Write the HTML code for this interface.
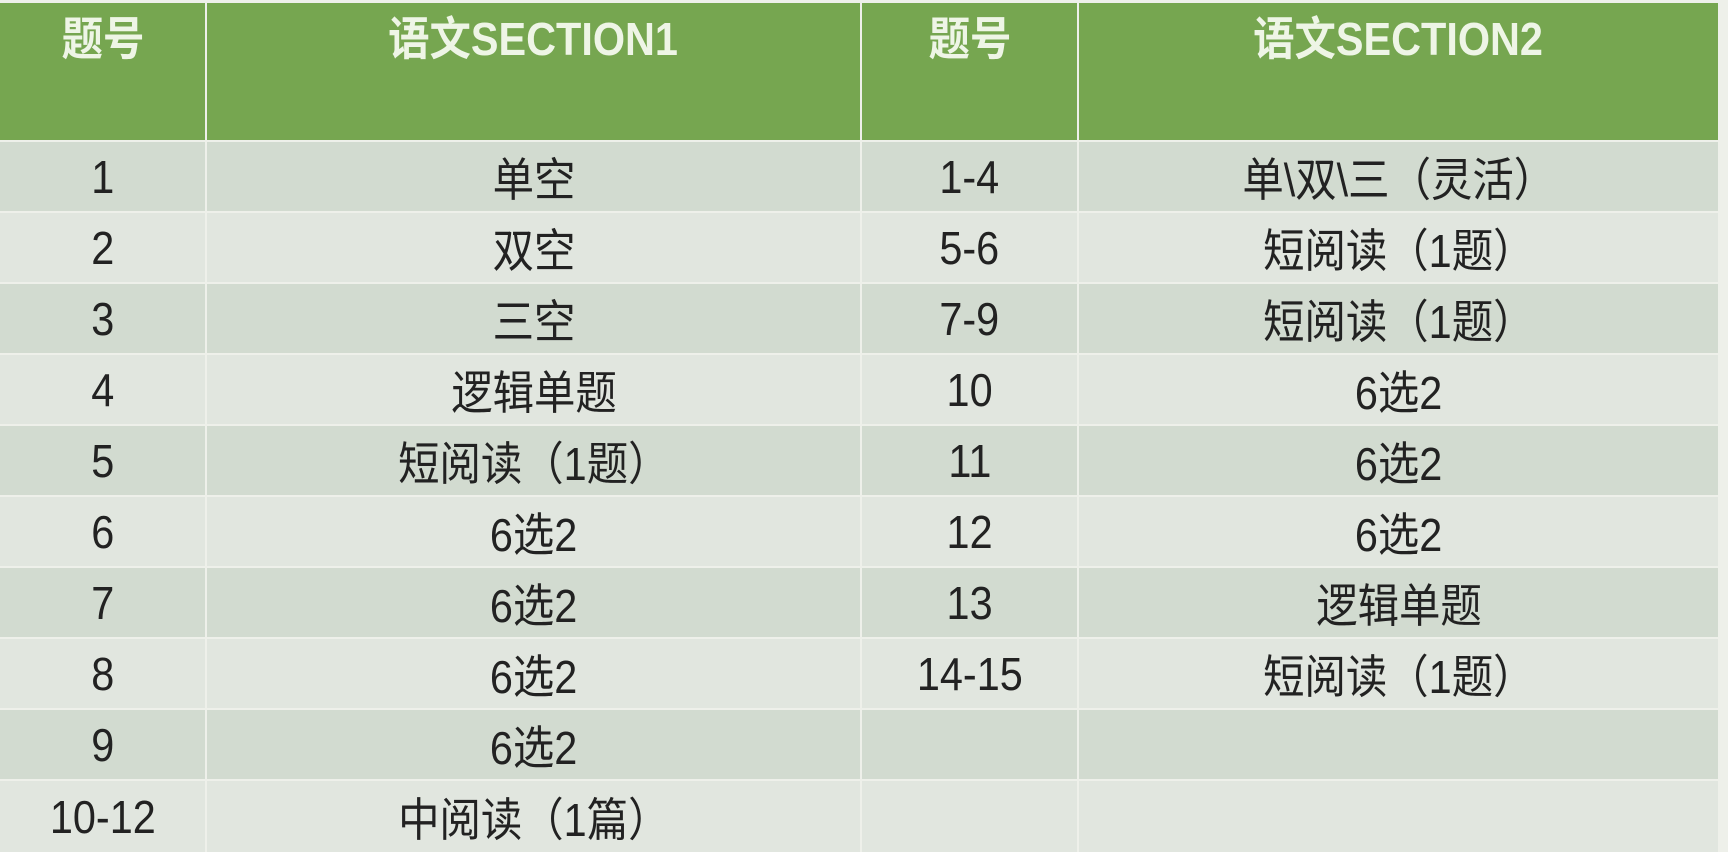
<!DOCTYPE html>
<html><head><meta charset="utf-8"><style>
html,body{margin:0;padding:0;background:#eef0ea;width:1728px;height:852px;overflow:hidden;position:relative}
.r{position:absolute;left:0;width:1728px;height:69px}
.c{position:absolute;top:0;height:100%;display:flex;align-items:center;justify-content:center;font-family:"Liberation Sans","Noto Sans CJK SC",sans-serif;font-size:46px;color:#222;box-sizing:border-box}
.a{left:0;width:205px}.b{left:207px;width:653px}.e{left:862px;width:215px}.f{left:1079px;width:639px}
.h .c{background:#76a650;color:#eef5e6;font-weight:bold;font-size:46px;align-items:flex-start;padding-top:0px}
.d .c{background:#d2dbd0}
.l .c{background:#e1e6df}
.c span{display:inline-block;transform:scaleX(0.9);white-space:nowrap}
</style></head><body>
<div class="r h" style="top:3px;height:137px"><div class="c a"><span>题号</span></div><div class="c b"><span>语文SECTION1</span></div><div class="c e"><span>题号</span></div><div class="c f"><span>语文SECTION2</span></div></div>
<div class="r d" style="top:142px"><div class="c a"><span>1</span></div><div class="c b"><span>单空</span></div><div class="c e"><span>1-4</span></div><div class="c f"><span>单\双\三（灵活）</span></div></div>
<div class="r l" style="top:213px"><div class="c a"><span>2</span></div><div class="c b"><span>双空</span></div><div class="c e"><span>5-6</span></div><div class="c f"><span>短阅读（1题）</span></div></div>
<div class="r d" style="top:284px"><div class="c a"><span>3</span></div><div class="c b"><span>三空</span></div><div class="c e"><span>7-9</span></div><div class="c f"><span>短阅读（1题）</span></div></div>
<div class="r l" style="top:355px"><div class="c a"><span>4</span></div><div class="c b"><span>逻辑单题</span></div><div class="c e"><span>10</span></div><div class="c f"><span>6选2</span></div></div>
<div class="r d" style="top:426px"><div class="c a"><span>5</span></div><div class="c b"><span>短阅读（1题）</span></div><div class="c e"><span>11</span></div><div class="c f"><span>6选2</span></div></div>
<div class="r l" style="top:497px"><div class="c a"><span>6</span></div><div class="c b"><span>6选2</span></div><div class="c e"><span>12</span></div><div class="c f"><span>6选2</span></div></div>
<div class="r d" style="top:568px"><div class="c a"><span>7</span></div><div class="c b"><span>6选2</span></div><div class="c e"><span>13</span></div><div class="c f"><span>逻辑单题</span></div></div>
<div class="r l" style="top:639px"><div class="c a"><span>8</span></div><div class="c b"><span>6选2</span></div><div class="c e"><span>14-15</span></div><div class="c f"><span>短阅读（1题）</span></div></div>
<div class="r d" style="top:710px"><div class="c a"><span>9</span></div><div class="c b"><span>6选2</span></div><div class="c e"></div><div class="c f"></div></div>
<div class="r l" style="top:781px;height:71px"><div class="c a"><span>10-12</span></div><div class="c b"><span>中阅读（1篇）</span></div><div class="c e"></div><div class="c f"></div></div>
</body></html>
